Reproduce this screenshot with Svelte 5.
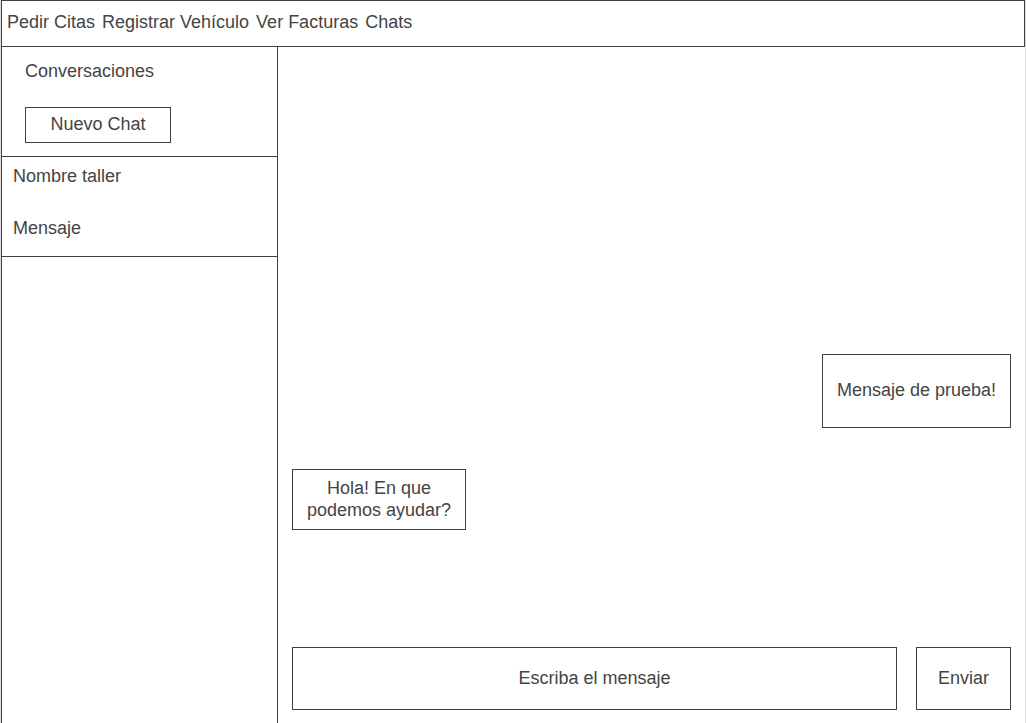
<script>
  const links = ['Pedir Citas', 'Registrar Vehículo', 'Ver Facturas', 'Chats'];
  const messages = [
    { text: 'Mensaje de prueba!', own: true },
    { text: 'Hola! En que podemos ayudar?', own: false }
  ];
  let draft = $state('');
</script>

<div class="page">
  <nav>
    {#each links as link}
      <a href="#top">{link}</a>
    {/each}
  </nav>
  <div class="body">
    <aside>
      <header>
        <h1>Conversaciones</h1>
        <button class="new" type="button">Nuevo Chat</button>
      </header>
      <a class="conversation" href="#chat">
        <span>Nombre taller</span>
        <span>Mensaje</span>
      </a>
    </aside>
    <main>
      <div class="messages">
        {#each messages as message}
          <p class:own={message.own}>{message.text}</p>
        {/each}
      </div>
      <form onsubmit={(event) => event.preventDefault()}>
        <input type="text" aria-label="Escriba el mensaje" placeholder="Escriba el mensaje" bind:value={draft} />
        <button type="submit">Enviar</button>
      </form>
    </main>
  </div>
</div>

<style>
  :global(body) {
    margin: 0;
    background: #fff;
  }
  .page, .page * {
    box-sizing: border-box;
  }
  .page {
    min-height: 100vh;
    display: flex;
    flex-direction: column;
    border: solid #ddd;
    border-width: 0 1px;
    color: #444;
    font: 18px/22px "Liberation Sans", Arial, sans-serif;
  }
  nav {
    display: flex;
    gap: 7px;
    height: 47px;
    padding: 10px 5px;
    border: 1px solid #404040;
  }
  a {
    color: inherit;
    text-decoration: none;
  }
  .body {
    flex: 1;
    display: flex;
  }
  aside {
    width: 277px;
    border: solid #404040;
    border-width: 0 1px;
  }
  header {
    height: 110px;
    padding: 13px 23px;
    border-bottom: 1px solid #404040;
  }
  h1 {
    margin: 0 0 25px;
    font: inherit;
  }
  button, input {
    border: 1px solid #404040;
    border-radius: 0;
    padding: 0 0 2px;
    background: #fff;
    color: inherit;
    font: inherit;
    text-align: center;
  }
  .new {
    width: 146px;
    height: 36px;
  }
  .conversation {
    display: flex;
    flex-direction: column;
    gap: 30px;
    height: 100px;
    padding: 8px 11px;
    border-bottom: 1px solid #404040;
  }
  main {
    flex: 1;
    min-width: 0;
    display: flex;
    flex-direction: column;
    padding: 14px 14px 13px;
  }
  .messages {
    flex: 1;
    display: flex;
    flex-direction: column;
    justify-content: flex-end;
    align-items: flex-start;
    gap: 41px;
    padding-bottom: 117px;
  }
  p {
    margin: 0;
    max-width: 174px;
    padding: 7px 13px 8px;
    border: 1px solid #404040;
    text-align: center;
  }
  p.own {
    align-self: flex-end;
    max-width: 100%;
    padding: 24px 14px 26px;
  }
  form {
    display: flex;
    gap: 19px;
    height: 63px;
  }
  input {
    flex: 1;
    min-width: 0;
  }
  input::placeholder {
    color: inherit;
    opacity: 1;
  }
  form button {
    width: 95px;
  }
</style>
